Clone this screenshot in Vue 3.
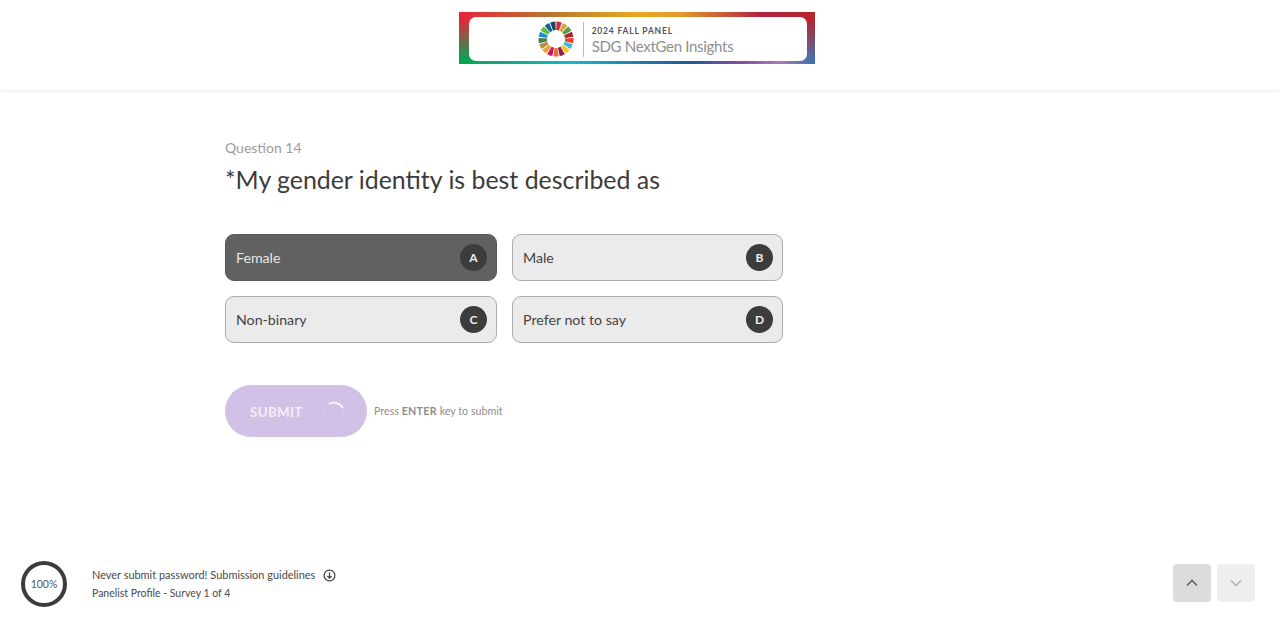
<script setup>
const options = [
  { label: 'Female', key: 'A', selected: true },
  { label: 'Male', key: 'B' },
  { label: 'Non-binary', key: 'C' },
  { label: 'Prefer not to say', key: 'D' },
]

// SDG wheel colours, clockwise from the top
const sdgColors = [
  '#e5243b', '#dda63a', '#4c9f38', '#c5192d', '#ff3a21', '#26bde2',
  '#fcc30b', '#a21942', '#fd6925', '#dd1367', '#fd9d24', '#bf8b2e',
  '#3f7e44', '#0a97d9', '#56c02b', '#00689d', '#19486a',
]

function wedge(i) {
  const step = (Math.PI * 2) / sdgColors.length
  const a = i * step - Math.PI / 2 + 0.03
  const b = (i + 1) * step - Math.PI / 2 - 0.03
  const pt = (r, t) => `${(18 + r * Math.cos(t)).toFixed(2)} ${(18 + r * Math.sin(t)).toFixed(2)}`
  return `M${pt(17.5, a)} A17.5 17.5 0 0 1 ${pt(17.5, b)} L${pt(9, b)} A9 9 0 0 0 ${pt(9, a)} Z`
}
</script>

<template>
  <div class="page">
    <header class="top">
      <div class="banner">
        <div class="banner-inner">
          <svg class="wheel" width="36" height="36" viewBox="0 0 36 36">
            <path v-for="(c, i) in sdgColors" :key="i" :d="wedge(i)" :fill="c" />
          </svg>
          <span class="divider"></span>
          <div class="banner-text">
            <div class="panel">2024 FALL PANEL</div>
            <div class="insights">SDG NextGen Insights</div>
          </div>
        </div>
      </div>
    </header>

    <main class="content">
      <div class="qnum">Question 14</div>
      <h1 class="qtitle">*My gender identity is best described as</h1>

      <div class="options">
        <div v-for="o in options" :key="o.key" class="option" :class="{ selected: o.selected }">
          <span>{{ o.label }}</span>
          <span class="badge">{{ o.key }}</span>
        </div>
      </div>

      <div class="actions">
        <button class="submit">
          <span class="submit-label">SUBMIT</span>
          <svg class="spinner" width="24" height="24" viewBox="0 0 24 24" fill="none">
            <circle cx="12" cy="12" r="9.5" stroke="#d6c8e9" stroke-width="1.5" />
            <path d="M7 3.9 A9.5 9.5 0 0 1 20.6 8" stroke="#fff" stroke-width="1.5" />
          </svg>
        </button>
        <span class="hint">Press <b>ENTER</b> key to submit</span>
      </div>
    </main>

    <footer class="bottom">
      <div class="progress">100%</div>
      <div class="info">
        <div class="info-line">
          <span class="guidelines">Never submit password! Submission guidelines</span>
          <svg class="down" width="13" height="13" viewBox="0 0 13 13" fill="none" stroke="#3c3c3c" stroke-width="1.2">
            <circle cx="6.5" cy="6.5" r="5.4" />
            <path d="M6.5 3.4V9M4.3 6.9l2.2 2.2 2.2-2.2" />
          </svg>
        </div>
        <div class="info-line survey">Panelist Profile - Survey 1 of 4</div>
      </div>
      <div class="nav">
        <button class="nav-btn up">
          <svg width="14" height="14" viewBox="0 0 14 14" fill="none" stroke="#666" stroke-width="1.7"><path d="M2 9.5l5-5 5 5" /></svg>
        </button>
        <button class="nav-btn dn">
          <svg width="14" height="14" viewBox="0 0 14 14" fill="none" stroke="#b5b5b5" stroke-width="1.7"><path d="M2 4.5l5 5 5-5" /></svg>
        </button>
      </div>
    </footer>
  </div>
</template>

<style scoped>
.page {
  height: 627px;
  display: flex;
  flex-direction: column;
  font-family: Lato, "Noto Sans", sans-serif;
  color: #3c3c3c;
  background: #fff;
  overflow: hidden;
}
.top {
  height: 90px;
  flex: none;
  display: flex;
  justify-content: center;
  align-items: flex-start;
  padding-top: 12px;
  box-sizing: border-box;
  box-shadow: 0 1px 4px rgba(0, 0, 0, 0.1);
}
.banner {
  position: relative;
  width: 356px;
  height: 52px;
  margin-right: 6px;
  padding: 5px 8px 3px 10px;
  box-sizing: border-box;
  background: linear-gradient(90deg, #0ba14f 0%, #12aa8a 15%, #18b4cf 32%, #1d7fb0 50%, #1d5a92 65%, #8a4fa5 80%, #a87bb8 90%, #3f6fa8 100%);
}
.banner::before {
  content: '';
  position: absolute;
  inset: 0;
  background: linear-gradient(90deg, #e5243b 0%, #b9752f 25%, #e8a820 50%, #e59a2c 62%, #b0213f 85%, #b7262c 100%);
  -webkit-mask-image: linear-gradient(180deg, #000 15%, transparent 90%);
  mask-image: linear-gradient(180deg, #000 15%, transparent 90%);
}
.banner-inner {
  position: relative;
  height: 100%;
  background: #fff;
  border-radius: 7px;
  display: flex;
  align-items: center;
  justify-content: center;
  gap: 9px;
  padding-right: 5px;
}
.wheel {
  filter: blur(0.5px) saturate(0.85);
}
.divider {
  width: 1px;
  height: 35px;
  background: #bdbdbd;
}
.banner-text {
  padding-top: 4px;
  margin-left: -1px;
}
.panel {
  font-size: 8.5px;
  font-weight: 700;
  letter-spacing: 0.8px;
  color: #555;
  line-height: 11px;
}
.insights {
  font-size: 15px;
  color: #8f8f8f;
  line-height: 19px;
  letter-spacing: -0.3px;
}
.content {
  flex: 1;
  padding: 48px 0 0 225px;
}
.qnum {
  font-size: 14px;
  line-height: 20px;
  color: #9c9c9c;
}
.qtitle {
  margin: 3px 0 0;
  font-size: 24.9px;
  line-height: 36px;
  font-weight: 400;
  color: #3c3c3c;
}
.options {
  margin-top: 37px;
  display: grid;
  grid-template-columns: 272px 271px;
  grid-auto-rows: 47px;
  column-gap: 15px;
  row-gap: 15px;
  width: 558px;
}
.option {
  display: flex;
  align-items: center;
  justify-content: space-between;
  padding: 0 9px 0 10px;
  box-sizing: border-box;
  background: #ebebeb;
  border: 1px solid #acacac;
  border-radius: 9px;
  font-size: 14.2px;
  color: #444;
}
.option.selected {
  background: #616161;
  border-color: #585858;
  color: #e6e6e6;
}
.badge {
  width: 27px;
  height: 27px;
  border-radius: 50%;
  background: #3c3c3c;
  color: #eee;
  font-size: 12px;
  font-weight: 700;
  display: flex;
  align-items: center;
  justify-content: center;
}
.actions {
  margin-top: 42px;
  display: flex;
  align-items: center;
  gap: 8px;
}
.submit {
  width: 142px;
  height: 52px;
  border: 0;
  border-radius: 26px;
  background: #d1c1e6;
  color: #f3eef9;
  font-family: inherit;
  font-size: 13.4px;
  font-weight: 700;
  letter-spacing: 0.3px;
  display: flex;
  align-items: center;
  padding: 0 0 0 25px;
  gap: 19px;
}
.submit-label {
  margin-top: 2px;
}
.spinner {
  margin-top: 2px;
}
.hint {
  font-size: 10.7px;
  color: #8d8d8d;
  margin: -2px 0 0 -1px;
}
.hint b {
  letter-spacing: 0.3px;
}
.bottom {
  flex: none;
  height: 90px;
  display: flex;
  align-items: center;
  padding: 4px 25px 0 21px;
  box-sizing: border-box;
}
.progress {
  width: 46px;
  height: 46px;
  box-sizing: border-box;
  border: 4px solid #3c3c3c;
  border-radius: 50%;
  display: flex;
  align-items: center;
  justify-content: center;
  font-size: 10.5px;
  color: #555;
}
.info {
  margin-left: 25px;
  font-size: 10.8px;
  line-height: 18px;
  color: #4a4a4a;
}
.info-line {
  display: flex;
  align-items: center;
  gap: 8px;
}
.guidelines {
  font-size: 10.95px;
}
.survey {
  font-size: 10.5px;
}
.nav {
  margin-left: auto;
  margin-top: -2px;
  display: flex;
  gap: 6px;
}
.nav-btn {
  width: 38px;
  height: 38px;
  border: 0;
  border-radius: 4px;
  display: flex;
  align-items: center;
  justify-content: center;
  padding: 0;
}
.nav-btn.up {
  background: #dcdcdc;
}
.nav-btn.dn {
  background: #efefef;
}
</style>
